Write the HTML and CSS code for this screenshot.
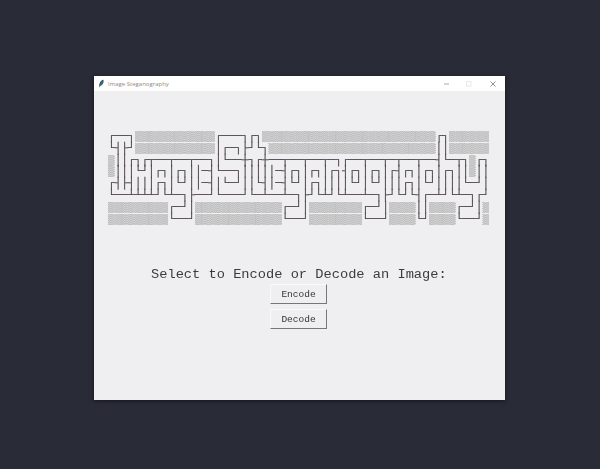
FILE: index.html
```html
<!DOCTYPE html>
<html lang="en">
<head>
<meta charset="utf-8">
<title>Image Steganography</title>
<link rel="stylesheet" href="styles.css">
</head>
<body>
<main class="window">
<header class="titlebar">
<svg class="feather" viewBox="0 0 7 10"><path d="M1 9.5C.6 5 2 1.5 5.6.8C6.5 4 4.5 7.2 1.8 8z" fill="#2c5267"/><path d="M1 9.5L4.3 2.5" stroke="#8eb4c4" stroke-width=".4"/></svg>
<span class="title">Image Steganography</span>
<svg class="controls" viewBox="0 0 54 8" fill="none"><path d="M0 4h5" stroke="#aaa"/><rect x="22.5" y="1.5" width="4.5" height="4.5" stroke="#e8e8e8"/><path d="M46.5 1.5l5 5m0-5l-5 5" stroke="#888" stroke-width=".9"/></svg>
</header>
<pre class="banner">┌──┐<i>▒▒▒▒▒▒▒▒▒▒▒▒</i>┌───┐┌┐<i>▒▒▒▒▒▒▒▒▒▒▒▒▒▒▒▒▒▒▒▒▒▒▒▒▒▒</i>┌┐<i>▒▒▒▒▒▒</i>
└┤├┘<i>▒▒▒▒▒▒▒▒▒▒▒▒</i>│┌─┐├┘└┐<i>▒▒▒▒▒▒▒▒▒▒▒▒▒▒▒▒▒▒▒▒▒▒▒▒▒</i>││<i>▒▒▒▒▒▒</i>
<i>▒</i>││┌┐┌┬──┬──┬──┐│└──┼┐┌┼──┬──┬──┬─┐┌──┬──┬─┬──┬──┤└─┬┐<i>▒</i>┌┐
<i>▒</i>│││└┘│┌┐│┌┐││─┤└──┐│││││─┤┌┐│┌┐│┌┐┤┌┐│┌┐│┌┤┌┐│┌┐│┌┐││<i>▒</i>││
┌┤├┤│││┌┐│└┘││─┤│└─┘││└┤│─┤└┘│┌┐││││└┘│└┘│││┌┐│└┘││││└─┘│
└──┴┴┴┴┘└┴─┐├──┘└───┘└─┴──┴─┐├┘└┴┘└┴──┴─┐├┘└┘└┤┌─┴┘└┴─┐┌┘
<i>▒▒▒▒▒▒▒▒▒</i>┌─┘│<i>▒▒▒▒▒▒▒▒▒▒▒▒▒</i>┌─┘│<i>▒▒▒▒▒▒▒▒</i>┌─┘│<i>▒▒▒▒</i>││<i>▒▒▒▒</i>┌─┘│<i>▒</i>
<i>▒▒▒▒▒▒▒▒▒</i>└──┘<i>▒▒▒▒▒▒▒▒▒▒▒▒▒</i>└──┘<i>▒▒▒▒▒▒▒▒</i>└──┘<i>▒▒▒▒</i>└┘<i>▒▒▒▒</i>└──┘<i>▒</i>
</pre>
<p class="prompt">Select to Encode or Decode an Image:</p>
<button class="action">Encode</button>
<button class="action">Decode</button>
</main>
</body>
</html>
```

FILE: styles.css
```css
body {
  margin: 0;
  height: 469px;
  background: #292b36;
  display: flex;
}
.window {
  width: 411px;
  height: 324px;
  margin: 76px 0 0 94px;
  background: #efeef0;
  display: flex;
  flex-direction: column;
  align-items: center;
  box-shadow: 0 1px 4px #15161d;
}
.titlebar {
  width: 100%;
  height: 15px;
  background: #fff;
  display: flex;
  align-items: center;
}
.feather { width: 7px; height: 9px; margin-left: 4px; }
.title { font: 6px "Open Sans", sans-serif; color: #8c8c8c; margin-left: 3px; }
.controls { width: 54px; height: 8px; margin: 0 7px 0 auto; }
.banner {
  margin: 40px 1.5px 0 0;
  height: 94.4px;
  font: 11.15px/11.8px "Liberation Mono", monospace;
  color: #433c40;
  -webkit-text-stroke: 0.15px #433c40;
  will-change: transform;
}
.banner i {
  display: inline-block;
  height: 11px;
  overflow: hidden;
  vertical-align: top;
  font-style: normal;
  color: #5a5a5a;
  -webkit-text-stroke: 0;
}
.prompt {
  margin: 40px 2px 0 0;
  height: 18.6px;
  font: 13.7px/20px "Liberation Mono", monospace;
  color: #3c3c3e;
  will-change: transform;
}
.action {
  width: 57px;
  height: 20px;
  margin: 0 2px 5px 0;
  padding: 0;
  border: 1px solid;
  border-color: #faf9fa #777 #777 #faf9fa;
  background: #efeef0;
  font: 9.5px "Liberation Mono", monospace;
  color: #333;
  will-change: transform;
}
```
